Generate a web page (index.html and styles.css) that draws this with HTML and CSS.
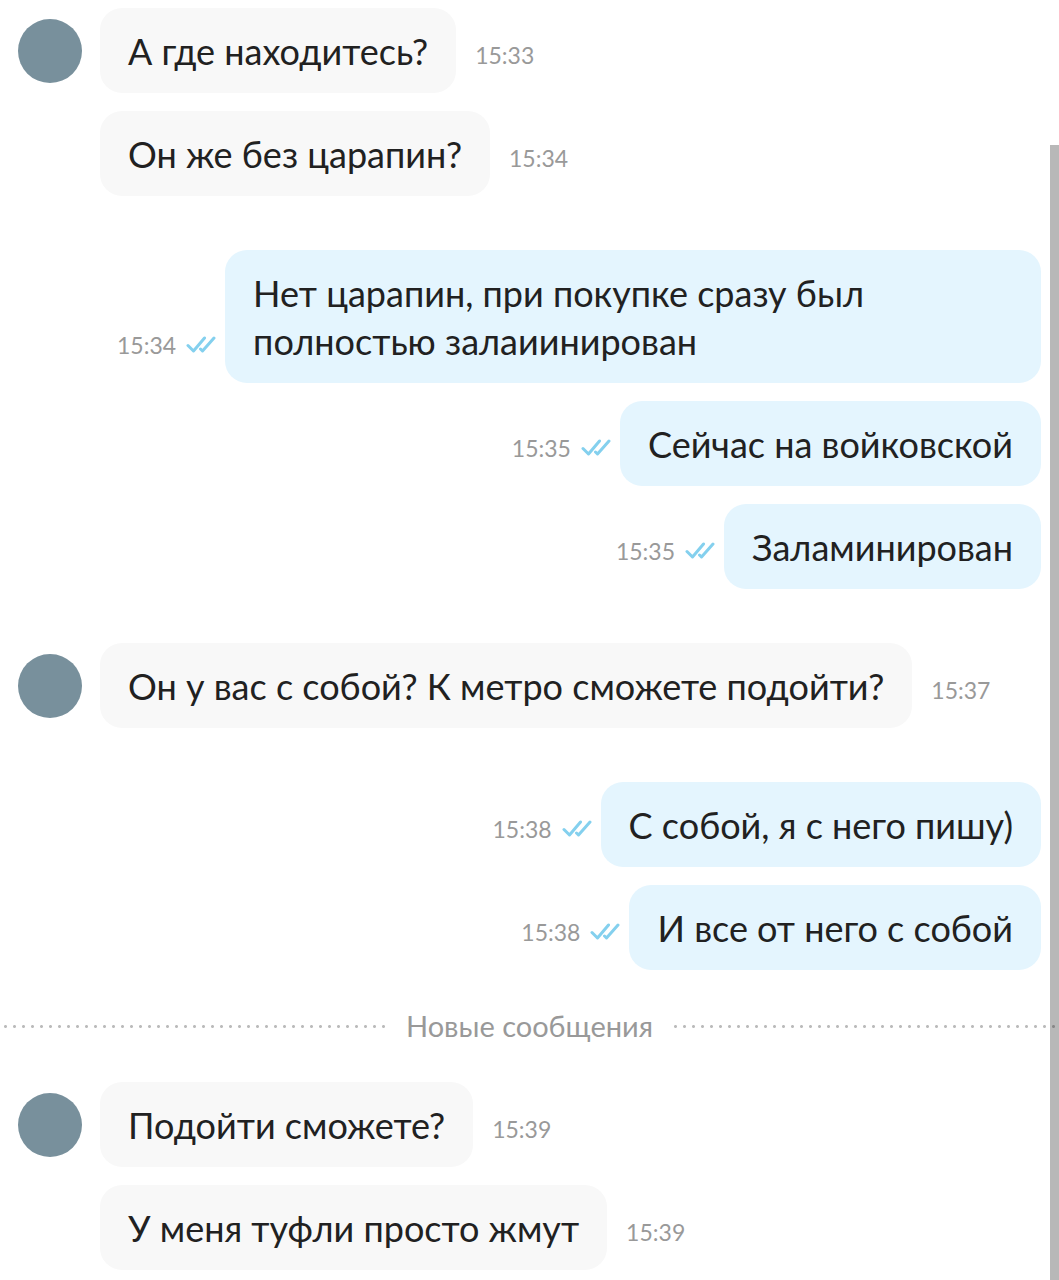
FILE: index.html
```html
<!DOCTYPE html>
<html lang="ru">
  <head>
    <meta charset="UTF-8" />
    <meta name="viewport" content="width=device-width, initial-scale=1.0" />
    <title>Сообщения</title>
    <link rel="stylesheet" href="styles.css">
  </head>
  <body>
    <svg class="sprite" aria-hidden="true">
      <symbol id="read" viewBox="0 0 30 20">
        <path d="M2 10.5 L7.5 16 L18.5 3 M14.5 14 L16.5 16 L28 3" />
      </symbol>
    </svg>
    <main class="chat">
      <section class="group incoming">
        <div class="avatar"></div>
        <div class="messages">
          <div class="message"><p class="bubble">А где находитесь?</p><time>15:33</time></div>
          <div class="message"><p class="bubble">Он же без царапин?</p><time>15:34</time></div>
        </div>
      </section>

      <section class="group outgoing">
        <div class="messages">
          <div class="message"><time>15:34</time><svg class="check"><use href="#read" /></svg><p class="bubble">Нет царапин, при покупке сразу был полностью залаиинирован</p></div>
          <div class="message"><time>15:35</time><svg class="check"><use href="#read" /></svg><p class="bubble">Сейчас на войковской</p></div>
          <div class="message"><time>15:35</time><svg class="check"><use href="#read" /></svg><p class="bubble">Заламинирован</p></div>
        </div>
      </section>

      <section class="group incoming">
        <div class="avatar"></div>
        <div class="messages">
          <div class="message"><p class="bubble">Он у вас с собой? К метро сможете подойти?</p><time>15:37</time></div>
        </div>
      </section>

      <section class="group outgoing">
        <div class="messages">
          <div class="message"><time>15:38</time><svg class="check"><use href="#read" /></svg><p class="bubble">С собой, я с него пишу)</p></div>
          <div class="message"><time>15:38</time><svg class="check"><use href="#read" /></svg><p class="bubble">И все от него с собой</p></div>
        </div>
      </section>

      <div class="divider">Новые сообщения</div>

      <section class="group incoming">
        <div class="avatar"></div>
        <div class="messages">
          <div class="message"><p class="bubble">Подойти сможете?</p><time>15:39</time></div>
          <div class="message"><p class="bubble">У меня туфли просто жмут</p><time>15:39</time></div>
        </div>
      </section>
    </main>
    <div class="scrollbar"></div>
  </body>
</html>
```

FILE: styles.css
```css
* {
  box-sizing: border-box;
}
body {
  margin: 0;
  background: #fff;
  color: #212121;
  font-family: Lato, "Open Sans", sans-serif;
  font-size: 36px;
  line-height: 48px;
}
.sprite {
  position: absolute;
  width: 0;
  height: 0;
}
.chat {
  display: flex;
  flex-direction: column;
  gap: 54px;
  padding: 8px 0 10px;
}
.group {
  display: flex;
  gap: 18px;
  padding: 0 18px;
}
.avatar {
  flex: none;
  width: 64px;
  height: 64px;
  margin-top: 11px;
  border-radius: 50%;
  background: #78909c;
}
.messages {
  flex: 1;
  display: flex;
  flex-direction: column;
  gap: 18px;
}
.message {
  display: flex;
  align-items: flex-end;
}
.outgoing .message {
  justify-content: flex-end;
  padding-left: 99px;
}
.bubble {
  margin: 0;
  padding: 19px 28px 18px;
  border-radius: 22px;
  background: #f8f8f8;
}
.outgoing .bubble {
  background: #e4f5fe;
}
time {
  color: #999;
  font-size: 23px;
  line-height: 28px;
  margin-bottom: 24px;
}
.incoming time {
  margin-left: 19px;
}
.check {
  flex: none;
  width: 30px;
  height: 20px;
  margin: 0 9px 28px 10px;
  fill: none;
  stroke: #84d0ee;
  stroke-width: 3;
  stroke-linecap: round;
  stroke-linejoin: round;
}
/* unread messages separator */
.divider {
  display: flex;
  align-items: center;
  gap: 17px;
  margin: -18px 0;
  color: #999;
  font-size: 29px;
  line-height: 40px;
}
.divider::before,
.divider::after {
  content: "";
  flex: 1;
  height: 3px;
  background: radial-gradient(circle, #bbb 1px, transparent 2px) 1px 0 / 9px 3px;
}
.scrollbar {
  position: fixed;
  top: 145px;
  right: 0;
  bottom: 0;
  width: 9px;
  background: rgba(0, 0, 0, 0.28);
}
```
